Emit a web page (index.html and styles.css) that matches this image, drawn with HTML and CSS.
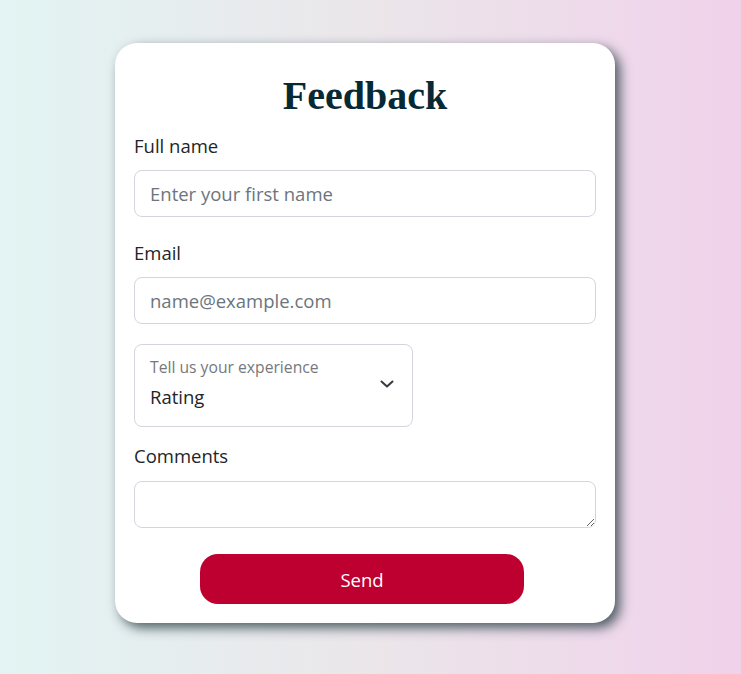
FILE: index.html
```html
<!DOCTYPE html>
<html lang="en">
<head>
<meta charset="utf-8">
<title>Feedback</title>
<link rel="stylesheet" href="styles.css">
</head>
<body>
<main class="page">
  <form class="card">
    <h1 class="title">Feedback</h1>
    <label class="label" for="name">Full name</label>
    <input class="field" id="name" type="text" placeholder="Enter your first name">
    <label class="label label-gap" for="email">Email</label>
    <input class="field" id="email" type="email" placeholder="name@example.com">
    <div class="select">
      <div class="select-text">
        <span class="select-label">Tell us your experience</span>
        <span class="select-value">Rating</span>
      </div>
      <svg class="chevron" width="14" height="8" viewBox="0 0 14 8" aria-hidden="true">
        <path d="M1.5 1.5 L7 6.5 L12.5 1.5" fill="none" stroke="#343a40" stroke-width="2" stroke-linecap="round" stroke-linejoin="round"/>
      </svg>
    </div>
    <label class="label label-comments" for="comments">Comments</label>
    <textarea class="field area" id="comments"></textarea>
    <button class="send" type="button">Send</button>
  </form>
</main>
</body>
</html>
```
FILE: styles.css
```css
* { box-sizing: border-box; }

html, body {
  margin: 0;
  padding: 0;
}

body {
  min-height: 674px;
  background: linear-gradient(90deg, #e2f4f3 0%, #ebe6ea 50%, #f0d2ea 100%);
  font-family: "Open Sans", "Noto Sans", sans-serif;
  color: #212529;
}

.page {
  padding: 43px 0 0 115px;
}

.card {
  width: 500px;
  height: 580px;
  background: #ffffff;
  border-radius: 22px;
  padding: 29px 19px 19px;
  display: flex;
  flex-direction: column;
  box-shadow: 5px 5px 12px rgba(50, 70, 78, 0.85);
}

.title {
  margin: 0 0 11px;
  font-family: "Liberation Serif", "Times New Roman", serif;
  font-weight: bold;
  font-size: 40px;
  line-height: 48px;
  text-align: center;
  color: #062a35;
}

.label {
  display: block;
  font-size: 18.5px;
  line-height: 30px;
  margin-bottom: 9px;
  color: #212529;
}

.label-gap { margin-top: 21px; }
.label-comments { margin-top: 14px; margin-bottom: 10px; }

.field {
  display: block;
  width: 100%;
  height: 47px;
  border: 1px solid #d2d6dc;
  border-radius: 8px;
  padding: 0 15px;
  font-family: "Open Sans", "Noto Sans", sans-serif;
  font-size: 18.5px;
  color: #212529;
  background: #fff;
  outline: none;
}

.field::placeholder { color: #6c757d; }

.area {
  resize: vertical;
  padding: 8px 15px;
}

.select {
  margin-top: 20px;
  width: 279px;
  height: 83px;
  border: 1px solid #d2d6dc;
  border-radius: 8px;
  padding: 12px 18px 0 15px;
  display: flex;
  align-items: center;
  justify-content: space-between;
}

.select-text {
  display: flex;
  flex-direction: column;
  align-self: flex-start;
}

.select-label {
  font-size: 15.7px;
  line-height: 20px;
  color: #76797c;
}

.select-value {
  margin-top: 5px;
  font-size: 18.5px;
  line-height: 30px;
  color: #212529;
}

.chevron {
  display: block;
  margin-top: -15px;
}

.send {
  margin: 26px 0 0 66px;
  width: 324px;
  height: 50px;
  border: none;
  border-radius: 18px;
  background: #bd0030;
  color: #ffffff;
  font-family: "Open Sans", "Noto Sans", sans-serif;
  font-size: 18.5px;
  cursor: pointer;
}
```
